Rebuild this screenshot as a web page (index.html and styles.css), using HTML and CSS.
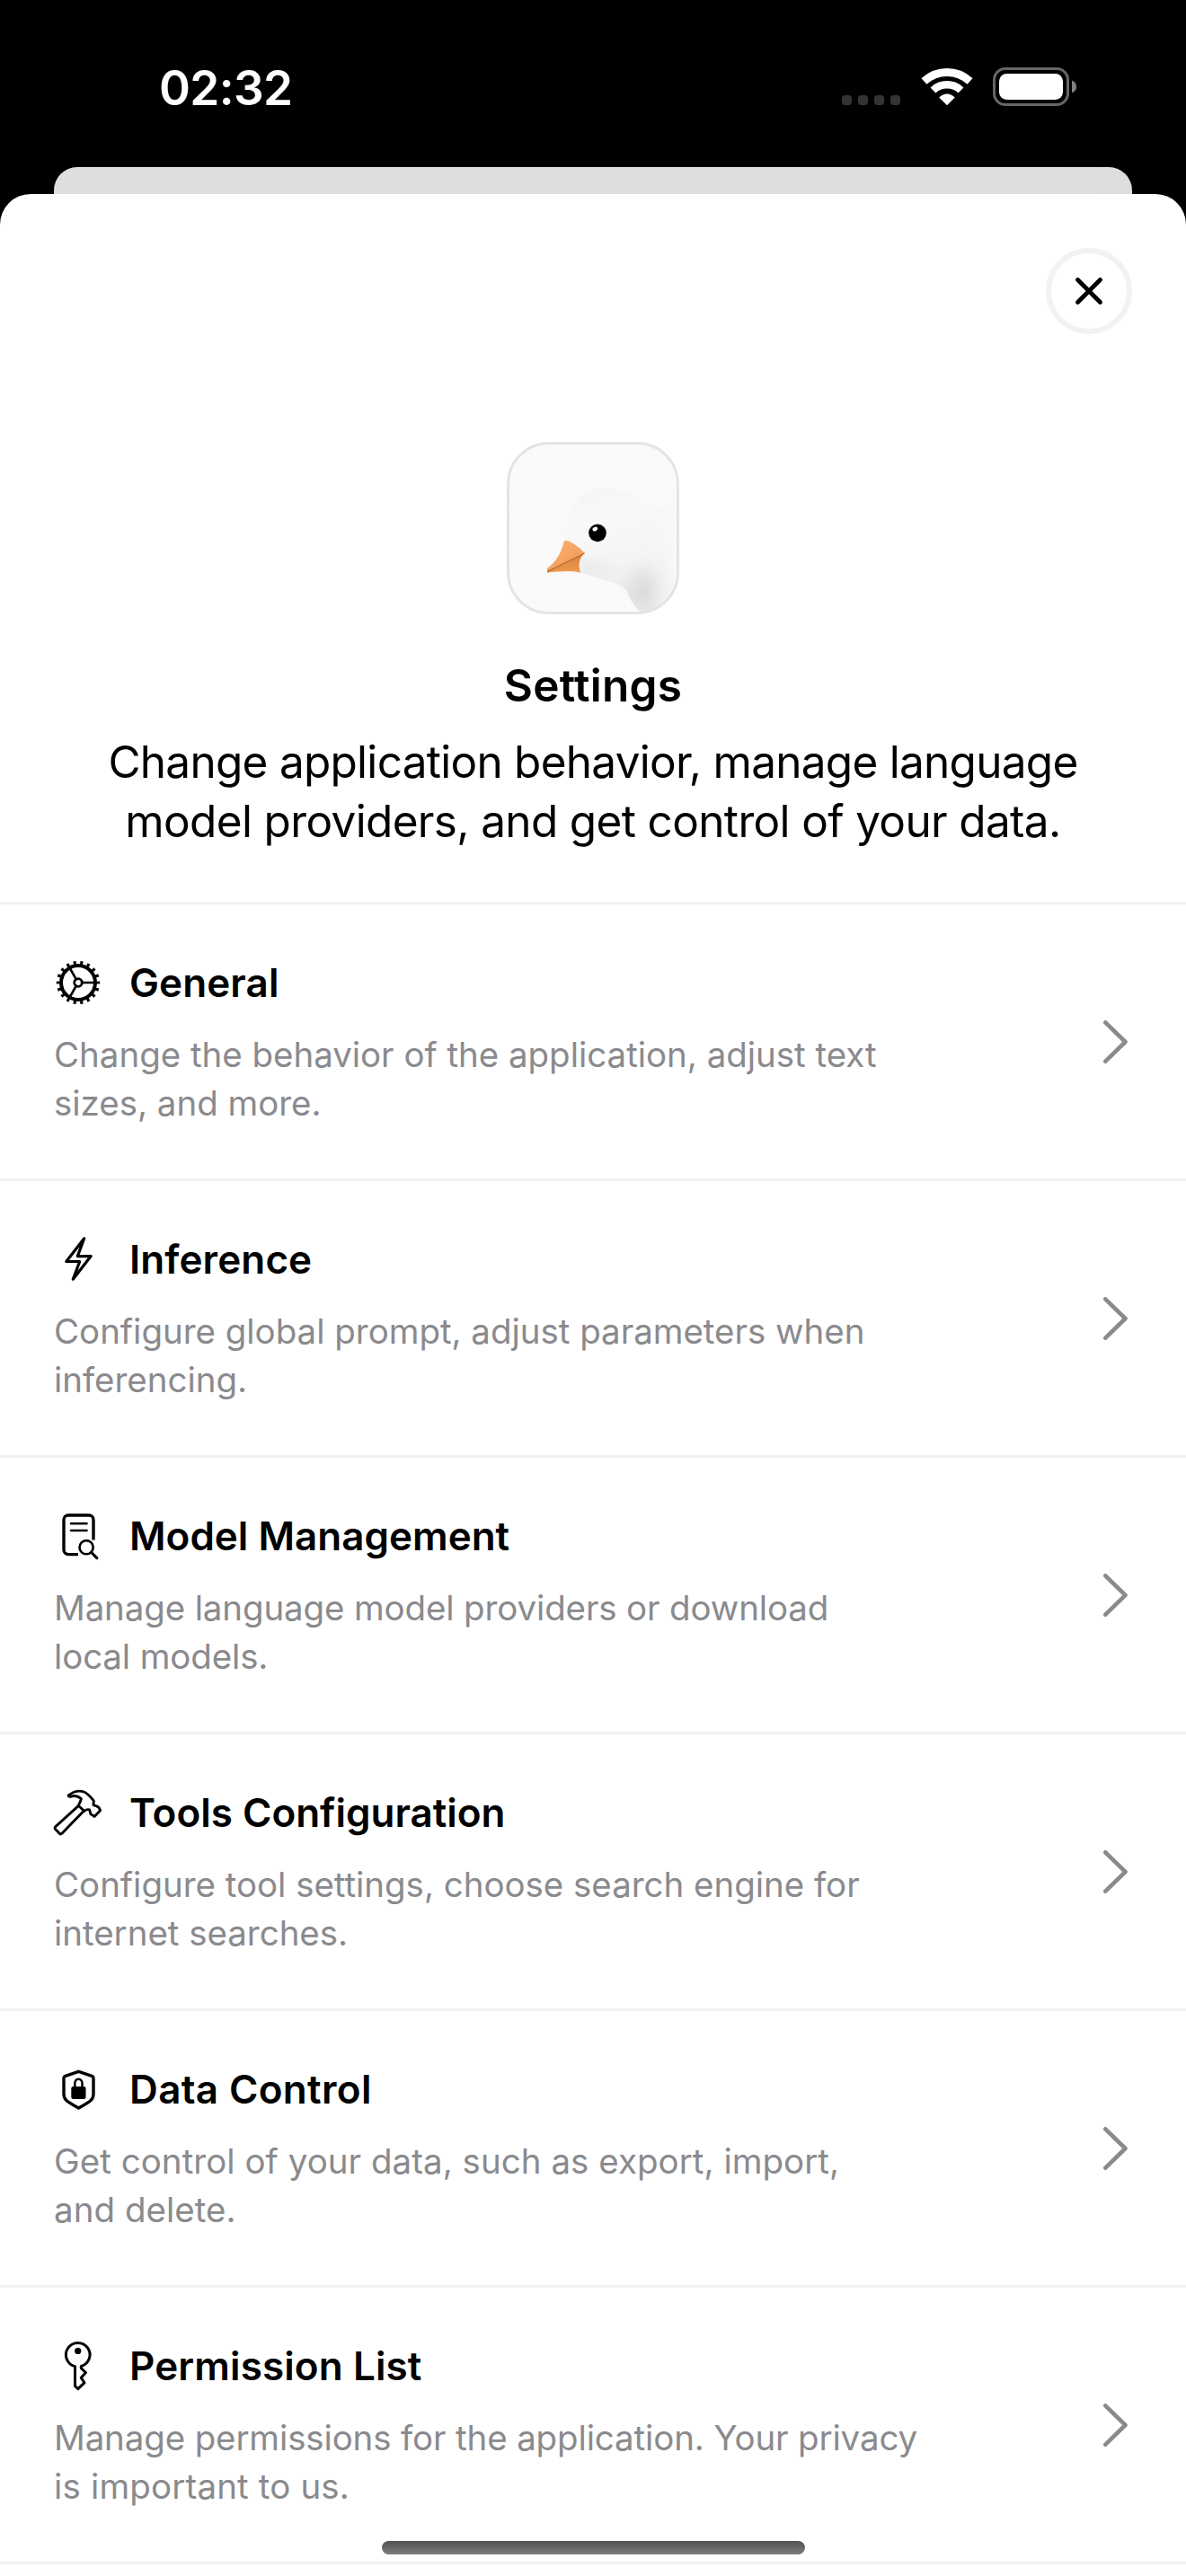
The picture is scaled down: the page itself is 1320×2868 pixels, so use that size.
FILE: index.html
```html
<!DOCTYPE html>
<html lang="en">
<head>
<meta charset="utf-8">
<title>Settings</title>
<link rel="stylesheet" href="styles.css">
</head>
<body>
<div class="screen">
  <header class="status">
    <span class="status__time">02:32</span>
    <div class="status__icons">
      <span class="signal"><i></i><i></i><i></i><i></i></span>
      <svg class="wifi" viewBox="0 0 58 43" width="58" height="43">
        <path d="M3.5 15.5A37.5 37.5 0 0 1 54.500 15.500" fill="none" stroke="#fff" stroke-width="9"/>
        <path d="M13.5 25.500A22.500 22.500 0 0 1 44.500 25.500" fill="none" stroke="#fff" stroke-width="8.500"/>
        <path d="M20.200 33.600Q29 25.600 37.800 33.600L29 42.300Z" fill="#fff"/>
      </svg>
      <svg class="battery" viewBox="0 0 94 43" width="94" height="43">
        <rect x="1.500" y="1.500" width="82" height="40" rx="12.500" fill="none" stroke="#666" stroke-width="3"/>
        <rect x="7" y="7" width="71" height="29" rx="8.500" fill="#fff"/>
        <path d="M88 14.500Q93 16.500 93 21.500T88 28.500Z" fill="#808080"/>
      </svg>
    </div>
  </header>
  <div class="backcard"></div>
  <main class="sheet">
    <div class="toolbar">
      <button class="close" aria-label="Close">
        <svg viewBox="0 0 32 32" width="32" height="32"><path d="M3.500 3.500L28.500 28.500M28.500 3.500L3.500 28.500" stroke="#000" stroke-width="4.800" stroke-linecap="round"/></svg>
      </button>
    </div>
    <section class="hero">
      <svg class="appicon" viewBox="72 66 576 576" width="192" height="192">
        <defs>
          <clipPath id="tile"><rect x="76" y="70" width="568" height="568" rx="136"/></clipPath>
          <clipPath id="neck"><path d="M318 503L430 538C450 543 465 550 475 570C485 598 500 615 525 642H650V400H318Z"/></clipPath>
          <linearGradient id="plumage" x1="300" y1="220" x2="450" y2="600" gradientUnits="userSpaceOnUse">
            <stop offset="0" stop-color="#f6f6f6"/><stop offset=".3" stop-color="#fafafa"/><stop offset=".68" stop-color="#f6f6f6"/><stop offset="1" stop-color="#e9e9e9"/>
          </linearGradient>
          <linearGradient id="fade" x1="540" y1="0" x2="640" y2="0" gradientUnits="userSpaceOnUse">
            <stop offset="0" stop-color="#fafafa" stop-opacity="0"/><stop offset="1" stop-color="#fafafa" stop-opacity=".95"/>
          </linearGradient>
          <radialGradient id="shade"><stop offset="0" stop-color="#c9c9c9" stop-opacity=".42"/><stop offset="1" stop-color="#c9c9c9" stop-opacity="0"/></radialGradient>
          <linearGradient id="upper" x1="240" y1="400" x2="280" y2="480" gradientUnits="userSpaceOnUse"><stop offset="0" stop-color="#f8ae70"/><stop offset="1" stop-color="#f49e58"/></linearGradient>
          <linearGradient id="lower" x1="0" y1="445" x2="0" y2="505" gradientUnits="userSpaceOnUse"><stop offset="0" stop-color="#d9843f"/><stop offset="1" stop-color="#f09a50"/></linearGradient>
          <filter id="grain" x="0" y="0" width="100%" height="100%">
            <feTurbulence type="fractalNoise" baseFrequency=".25" numOctaves="2"/>
            <feColorMatrix values="0 0 0 0 .5  0 0 0 0 .5  0 0 0 0 .5  .3 0 0 0 -.14"/>
          </filter>
        </defs>
        <g clip-path="url(#tile)">
          <rect x="72" y="66" width="576" height="576" fill="#fbfbfb"/>
          <path d="M262 400C264 350 275 305 295 275C325 230 380 212 430 222C500 236 570 285 650 308V642H525C500 615 485 598 475 570C465 550 450 543 430 538L318 503C308 480 315 455 330 437Z" fill="url(#plumage)"/>
          <ellipse cx="530" cy="560" rx="85" ry="95" fill="url(#shade)" clip-path="url(#neck)"/>
          <ellipse cx="350" cy="488" rx="110" ry="60" fill="url(#shade)" opacity=".5" clip-path="url(#neck)"/>
          <rect x="540" y="280" width="110" height="362" fill="url(#fade)"/>
          <rect x="72" y="66" width="576" height="576" filter="url(#grain)"/>
          <path d="M207 501L332 437C312 455 310 480 319 503C280 494 240 500 207 503Z" fill="url(#lower)"/>
          <path d="M263 398C268 393 276 396 283 399C302 409 318 422 332 437L207 501V489C238 465 255 435 263 398Z" fill="url(#upper)"/>
          <path d="M207 500L332 438" stroke="#b56a30" stroke-width="4"/>
          <circle cx="375" cy="370" r="29.500"/>
          <ellipse cx="367" cy="357" rx="9" ry="6.500" fill="#fff" transform="rotate(-28 367 357)"/>
        </g>
        <rect x="76.500" y="70.500" width="567" height="567" rx="136" fill="none" stroke="#e4e4e6" stroke-width="9"/>
      </svg>
      <h1 class="hero__title">Settings</h1>
      <p class="hero__text">Change application behavior, manage language<br><span class="hero__line">model providers, and get control of your data.</span></p>
    </section>
    <nav class="list">
      <a class="row row--general">
        <div class="row__body">
          <div class="row__head">
            <svg class="row__icon" viewBox="0 0 54 54"><circle cx="27" cy="27" r="19" stroke-width="4"/><circle cx="27" cy="27" r="22.200" stroke-width="4" pathLength="18" stroke-dasharray=".4 .6" stroke-dashoffset=".2" stroke-linecap="butt"/><circle cx="27" cy="27" r="4.300" stroke-width="2.800"/><path d="M31 27H46M24.800 23.300L17.500 10.500M24.800 30.700L17.500 43.500" stroke-width="2.600"/></svg>
            <h2 class="row__title">General</h2>
          </div>
          <p class="row__text">Change the behavior of the application, adjust text<br>sizes, and more.</p>
        </div>
        <svg class="chevron" viewBox="0 0 27 48"><path d="M2.300 2.300L24.500 24L2.300 45.700"/></svg>
      </a>
      <a class="row row--inference">
        <div class="row__body">
          <div class="row__head">
            <svg class="row__icon" viewBox="0 0 54 54"><path d="M33.700 3.800L13.800 29.500H28.700L21.300 49.200L41.200 23.600H26.300Z" stroke-width="3.200"/></svg>
            <h2 class="row__title">Inference</h2>
          </div>
          <p class="row__text">Configure global prompt, adjust parameters when<br>inferencing.</p>
        </div>
        <svg class="chevron" viewBox="0 0 27 48"><path d="M2.300 2.300L24.500 24L2.300 45.700"/></svg>
      </a>
      <a class="row row--model">
        <div class="row__body">
          <div class="row__head">
            <svg class="row__icon" viewBox="0 0 54 54"><path d="M44 31.500V9A5 5 0 0 0 39 4H16A5 5 0 0 0 11 9V42.600A5 5 0 0 0 16 47.600H27" stroke-width="3.400" stroke-linecap="butt"/><path d="M19 13.300H36.500M19 21H36.500" stroke-width="2.600"/><circle cx="36.100" cy="39.700" r="7.600" stroke-width="2.600"/><path d="M41.800 45.500L47.800 51.600" stroke-width="3.200"/></svg>
            <h2 class="row__title">Model Management</h2>
          </div>
          <p class="row__text">Manage language model providers or download<br>local models.</p>
        </div>
        <svg class="chevron" viewBox="0 0 27 48"><path d="M2.300 2.300L24.500 24L2.300 45.700"/></svg>
      </a>
      <a class="row row--tools">
        <div class="row__body">
          <div class="row__head">
            <svg class="row__icon" viewBox="0 0 54 54"><path d="M27.200 19.600L1.700 42.800Q.5 44.200 1.600 45.500L6.200 50.300Q7.600 51.500 9 50.200L33.200 25.200" stroke-width="2.900"/><path d="M27.200 19.200L33.700 25.300Q36.500 23 39.600 23.800L40.900 28.600L45 31.400L51.600 24.700Q50.300 20.400 46.800 19.600L44 18.600L44.300 13.800Q38 6 33.500 4Q25 1 16.200 7.900Q15.800 9.500 18.500 9.300C23 7.600 27 8.600 30.400 11.800Q29.500 15 27.200 19.200Z" stroke-width="2.900"/></svg>
            <h2 class="row__title">Tools Configuration</h2>
          </div>
          <p class="row__text">Configure tool settings, choose search engine for<br>internet searches.</p>
        </div>
        <svg class="chevron" viewBox="0 0 27 48"><path d="M2.300 2.300L24.500 24L2.300 45.700"/></svg>
      </a>
      <a class="row row--data">
        <div class="row__body">
          <div class="row__head">
            <svg class="row__icon" viewBox="0 0 54 54"><path d="M27.500 7.300L42.300 12.300Q44 13 44 14.500V32.500Q44 37.500 39.800 40.600Q34 44.500 27.500 48.100Q21 44.500 15.200 40.600Q11 37.500 11 32.500V14.500Q11 13 12.700 12.300Z" stroke-width="3.400"/><rect x="19.300" y="24" width="16.200" height="14" rx="2.200" fill="#000" stroke="none"/><path d="M23.300 25V20.500A4.100 4.800 0 0 1 31.500 20.500V25" stroke-width="2.500"/></svg>
            <h2 class="row__title">Data Control</h2>
          </div>
          <p class="row__text">Get control of your data, such as export, import,<br>and delete.</p>
        </div>
        <svg class="chevron" viewBox="0 0 27 48"><path d="M2.300 2.300L24.500 24L2.300 45.700"/></svg>
      </a>
      <a class="row row--permission">
        <div class="row__body">
          <div class="row__head">
            <svg class="row__icon" viewBox="0 0 54 54"><path d="M23.500 27.600A13.300 13.300 0 1 1 30.300 27.500V29.600L35.500 34.500L30.200 40.200L34 45.800L26.800 52.700L23.500 49.500Z" stroke-width="3"/><circle cx="26.700" cy="10.400" r="3.600" fill="#000" stroke="none"/></svg>
            <h2 class="row__title">Permission List</h2>
          </div>
          <p class="row__text">Manage permissions for the application. Your privacy<br><span class="row__line">is important to us.</span></p>
        </div>
        <svg class="chevron" viewBox="0 0 27 48"><path d="M2.300 2.300L24.500 24L2.300 45.700"/></svg>
      </a>
    </nav>
  </main>
  <div class="home"></div>
</div>
</body>
</html>
```

FILE: styles.css
```css
* {
  box-sizing: border-box;
  margin: 0;
  padding: 0;
}

body {
  background: #000;
  color: #000;
  font-family: Inter, "Liberation Sans", sans-serif;
}

svg {
  display: block;
  flex: none;
}

.screen {
  position: relative;
  display: flex;
  flex-direction: column;
  width: 1320px;
  height: 2868px;
  overflow: hidden;
}

/* Status bar */
.status {
  display: flex;
  justify-content: space-between;
  align-items: flex-start;
  height: 186px;
  padding: 66px 121px 0 177px;
}

.status__time {
  color: #fff;
  font-size: 53px;
  font-weight: 600;
  line-height: 64px;
  letter-spacing: -0.65px;
}

.status__icons {
  display: flex;
  align-items: flex-end;
  margin-top: 9px;
}

.signal {
  display: flex;
  gap: 7px;
  margin: 0 23px 1px 0;
}

.signal i {
  width: 11px;
  height: 11px;
  border-radius: 3.5px;
  background: #333;
}

.wifi {
  margin-right: 22px;
}

/* Sheet stack */
.backcard {
  flex: none;
  height: 30px;
  margin: 0 60px;
  border-radius: 26px 26px 0 0;
  background: linear-gradient(90deg, #dddfde 90%, #dedddd 97%);
}

.sheet {
  flex: 1;
  border-radius: 34px 34px 0 0;
  background: #fff;
}

.toolbar {
  display: flex;
  justify-content: flex-end;
  padding: 60px 60px 0;
}

.close {
  display: flex;
  align-items: center;
  justify-content: center;
  width: 96px;
  height: 96px;
  border: 6px solid #f2f2f2;
  border-radius: 50%;
  background: #fff;
}

.hero {
  display: flex;
  flex-direction: column;
  align-items: center;
  height: 632px;
  padding-top: 120px;
  text-align: center;
}

.hero__title {
  margin-top: 49px;
  font-size: 49.5px;
  font-weight: 600;
  line-height: 60px;
  letter-spacing: 0.25px;
}

.hero__text {
  margin-top: 22px;
  font-size: 49.5px;
  line-height: 66px;
  letter-spacing: -0.73px;
  white-space: nowrap;
}

.hero__line {
  letter-spacing: -0.65px;
}

/* Settings rows */
.row {
  display: flex;
  justify-content: space-between;
  align-items: center;
  height: 308px;
  padding: 0 65px 0 60px;
  border-top: 3px solid #f2f2f2;
}

.list {
  border-bottom: 3px solid #f2f2f2;
}

.row__body {
  height: 305px;
  padding-top: 60px;
}

.row__head {
  display: flex;
  align-items: center;
  gap: 30px;
}

.row__icon {
  width: 54px;
  height: 54px;
  overflow: visible;
  fill: none;
  stroke: #000;
  stroke-linecap: round;
  stroke-linejoin: round;
}

.row__title {
  font-size: 44px;
  font-weight: 600;
  line-height: 54px;
}

.row__text {
  margin-top: 26px;
  color: #8a8a8e;
  font-size: 38.5px;
  line-height: 54px;
  white-space: nowrap;
}

.row--general .row__title,
.row--inference .row__title,
.row--permission .row__title { letter-spacing: 0.11px; }
.row--data .row__title { letter-spacing: 0.35px; }

.row--general .row__text,
.row--inference .row__text,
.row--tools .row__text { letter-spacing: -0.03px; }
.row--model .row__text,
.row--permission .row__text { letter-spacing: -0.14px; }
.row--data .row__text { letter-spacing: 0.03px; }
.row__line { letter-spacing: 0.15px; }

.chevron {
  width: 27px;
  height: 48px;
  fill: none;
  stroke: #8a8a8e;
  stroke-width: 4.6px;
  stroke-linecap: round;
  stroke-linejoin: round;
}

/* Home indicator, floating over the list */
.home {
  position: absolute;
  left: 425px;
  bottom: 24px;
  width: 471px;
  height: 15px;
  border-radius: 8px;
  background: linear-gradient(#515151, #7e7e7e);
}
```
